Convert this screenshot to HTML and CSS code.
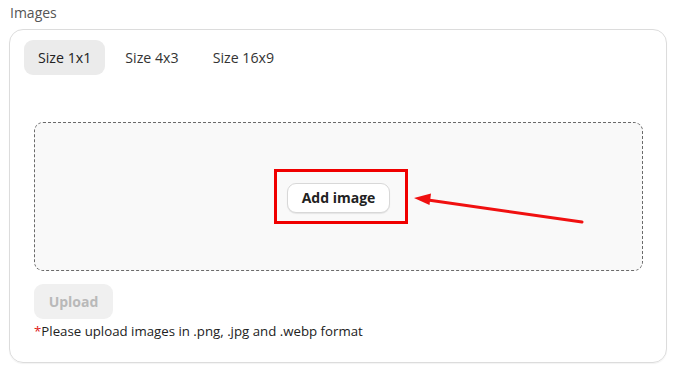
FILE: index.html
```html
<!DOCTYPE html>
<html>
<head>
<meta charset="utf-8">
<link rel="stylesheet" href="styles.css">
</head>
<body>
<div class="page">
  <div class="label">Images</div>
  <div class="card">
    <div class="tabs">
      <div class="tab active">Size 1x1</div>
      <div class="tab">Size 4x3</div>
      <div class="tab">Size 16x9</div>
    </div>
    <div class="content">
      <div class="dropzone">
        <button class="add-btn">Add image</button>
      </div>
      <button class="upload-btn">Upload</button>
      <div class="note"><span class="star">*</span>Please upload images in .png, .jpg and .webp format</div>
    </div>
  </div>
  <div class="highlight"></div>
  <svg class="arrow" width="675" height="369" viewBox="0 0 675 369">
    <line x1="582" y1="222" x2="428" y2="200" stroke="#f01010" stroke-width="3" stroke-linecap="round"/>
    <polygon points="414,198 431,193.5 429.5,205" fill="#f01010"/>
  </svg>
</div>
</body>
</html>
```
FILE: styles.css
```css
* { box-sizing: border-box; }
html, body { margin: 0; padding: 0; background: #fff; }
body {
  font-family: "Open Sans", "Noto Sans", sans-serif;
  color: #222;
  width: 675px;
  height: 369px;
  overflow: hidden;
}
.page { position: relative; width: 675px; height: 369px; }
.label {
  padding: 3px 0 0 10px;
  height: 29px;
  font-size: 14px;
  color: #555;
  line-height: 20px;
}
.card {
  margin-left: 9px;
  width: 658px;
  height: 334px;
  border: 1px solid #dcdcdc;
  border-radius: 14px;
  padding: 10px 14px 0 14px;
  box-shadow: 0 1px 1px rgba(0,0,0,0.05);
}
.tabs { display: flex; gap: 6px; }
.tab {
  height: 35px;
  padding: 0 14px;
  display: flex;
  align-items: center;
  font-size: 14.2px;
  color: #333;
  border-radius: 9px;
}
.tab.active { background: #ebebeb; color: #222; }
.content { padding: 0 9px 0 10px; }
.dropzone {
  margin-top: 47px;
  height: 149px;
  border: 1px dashed #6a6a6a;
  border-radius: 9px;
  background: #f9f9f9;
  display: flex;
  align-items: center;
  justify-content: center;
}
.add-btn {
  font-family: inherit;
  height: 30px;
  padding: 0 14px;
  background: #fff;
  border: 1px solid #d8d8d8;
  border-radius: 9px;
  font-size: 14px;
  font-weight: 700;
  color: #222;
  box-shadow: 0 1px 1px rgba(0,0,0,0.08);
  margin-top: 2px;
}
.upload-btn {
  display: block;
  font-family: inherit;
  margin-top: 13px;
  height: 35px;
  width: 79px;
  border: none;
  border-radius: 9px;
  background: #f0f0f0;
  color: #b9b9b9;
  font-size: 14px;
  font-weight: 700;
}
.note {
  margin-top: 3px;
  font-size: 13.25px;
  line-height: 18px;
  color: #222;
}
.star { color: #e02020; }
.highlight {
  position: absolute;
  left: 274px;
  top: 169px;
  width: 134px;
  height: 55px;
  border: 3px solid #f00000;
}
.arrow { position: absolute; left: 0; top: 0; pointer-events: none; }
```
